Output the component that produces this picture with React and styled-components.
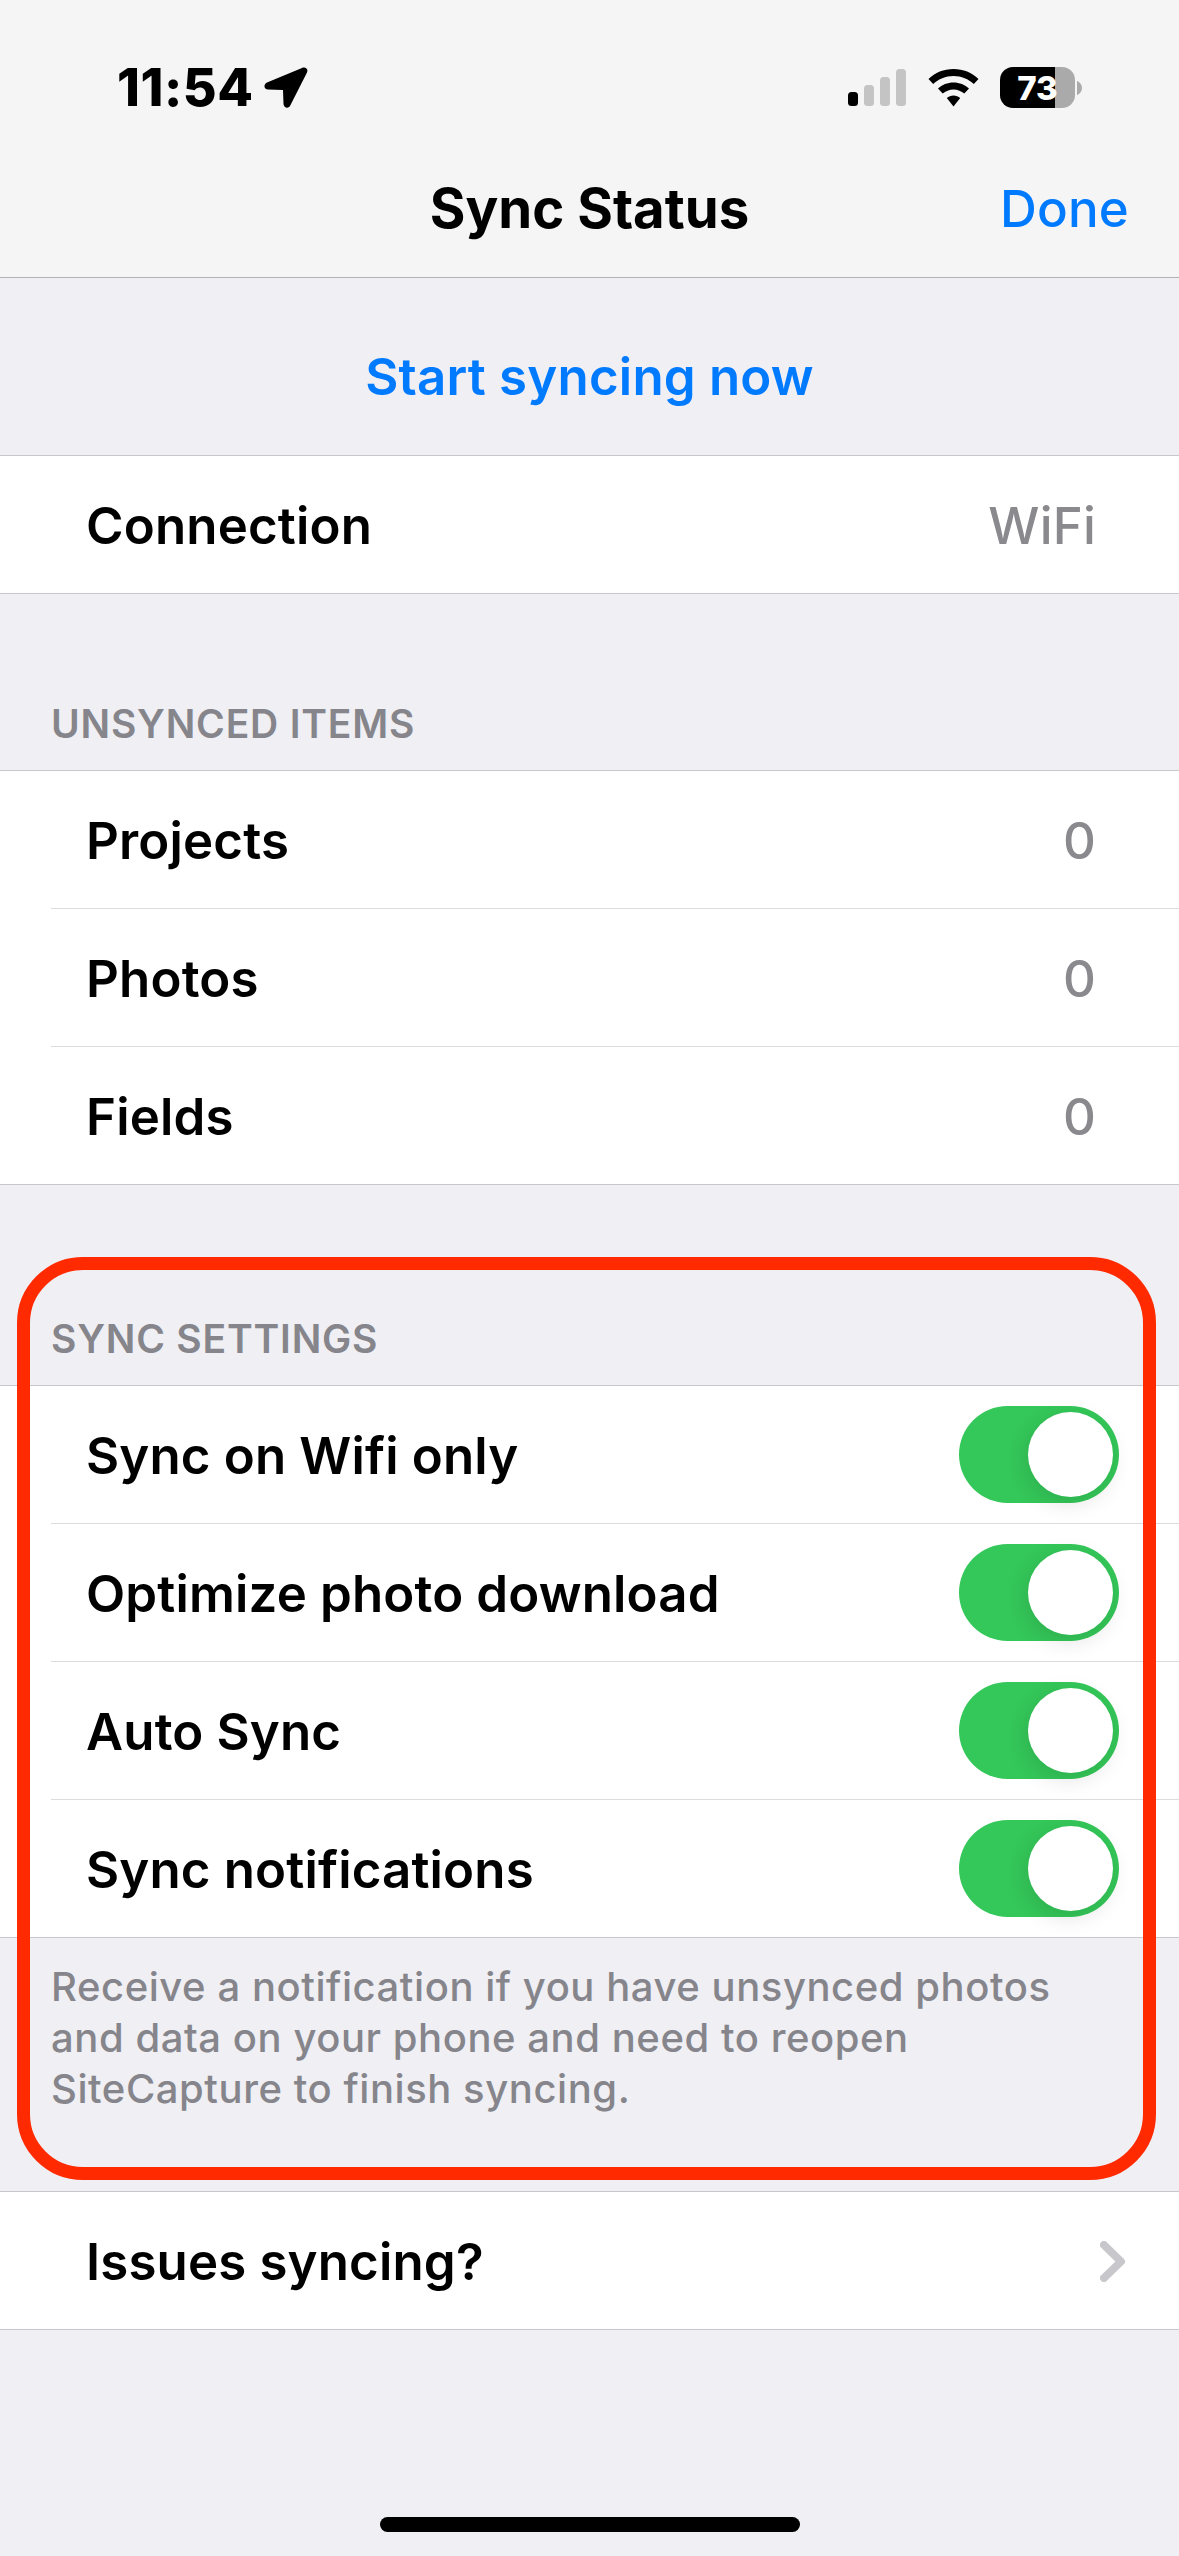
import React from "react";
import styled, { createGlobalStyle } from "styled-components";

const GlobalStyle = createGlobalStyle`
  html, body {
    margin: 0;
    padding: 0;
    background: #efeff4;
    font-family: Inter, "Noto Sans", sans-serif;
  }
`;

const Page = styled.div`
  position: relative;
  display: flex;
  flex-direction: column;
  width: 1179px;
  height: 2556px;
  overflow: hidden;
  background: #efeff4;
`;

// top of the screen ---------
const Header = styled.header`
  height: 277px;
  background: #f5f5f6;
  border-bottom: 1px solid #b1b1b5;
`;

const StatusBar = styled.div`
  display: flex;
  align-items: center;
  height: 41px;
  padding: 67px 98px 0 117px;
`;

const Time = styled.span`
  margin-right: 11px;
  font-size: 52px;
  font-weight: 800;
  letter-spacing: 0.5px;
  line-height: 41px;
  color: #000;
`;

const StatusIcons = styled.div`
  display: flex;
  align-items: center;
  gap: 22px;
  margin-left: auto;
`;

const Battery = styled.div`
  display: flex;
  align-items: center;
  justify-content: center;
  width: 75px;
  height: 41px;
  border-radius: 13px;
  background: linear-gradient(to right, #000 55px, #aaa 55px);
  font-size: 33px;
  font-weight: 800;
  color: #fff;
`;

const BatteryWrap = styled.div`
  display: flex;
  align-items: center;
  gap: 2px;
  margin-left: -1px;
  margin-right: -1px;
`;

const NavRow = styled.div`
  display: grid;
  grid-template-columns: 1fr auto 1fr;
  align-items: center;
  height: 60px;
  margin-top: 67px;
  padding: 0 50px;
`;

const NavTitle = styled.h1`
  grid-column: 2;
  margin: 0;
  font-size: 54.5px;
  font-weight: 700;
  color: #000;
`;

const NavAction = styled.span`
  justify-self: end;
  font-size: 51px;
  font-weight: 500;
  letter-spacing: 0.2px;
  color: #007aff;
`;

const ActionBand = styled.div`
  display: flex;
  align-items: center;
  justify-content: center;
  height: 177px;
  padding-top: 20px;
  box-sizing: border-box;
  font-size: 51px;
  font-weight: 600;
  letter-spacing: 0.2px;
  color: #007aff;
`;

// lists ---------
const Group = styled.div`
  background: #fff;
  border-top: 1px solid #c8c7cc;
  border-bottom: 1px solid #c8c7cc;
`;

const Row = styled.div`
  display: flex;
  align-items: center;
  justify-content: space-between;
  box-sizing: border-box;
  height: 138.3px;
  margin-left: 51px;
  padding: 2px 60px 0 35px;
  border-bottom: 1px solid #dcdcde;

  &:last-child {
    height: 137px;
    border-bottom: none;
  }
`;

const Label = styled.span`
  font-size: 51px;
  font-weight: 600;
  letter-spacing: 0.15px;
  color: #000;
`;

const Value = styled.span`
  margin-right: 23px;
  font-size: 51px;
  font-weight: 500;
  letter-spacing: 0.2px;
  color: #8a8a8e;
`;

const Chevron = styled.svg`
  width: 26px;
  height: 41px;
  margin-right: -7px;
`;

const SectionTitle = styled.div`
  display: flex;
  align-items: flex-end;
  box-sizing: border-box;
  height: ${(p) => p.$height}px;
  padding: 0 0 21px 51px;
  font-size: 39px;
  font-weight: 600;
  letter-spacing: 0.8px;
  line-height: 50px;
  color: #85858b;
`;

const FooterNote = styled.p`
  box-sizing: border-box;
  height: 252.5px;
  margin: 0;
  padding: 23px 40px 0 51px;
  font-size: 40px;
  font-weight: 500;
  letter-spacing: 0.56px;
  line-height: 51px;
  color: #85858b;
`;

const Toggle = styled.div`
  display: flex;
  align-items: center;
  justify-content: flex-end;
  box-sizing: border-box;
  width: 160px;
  height: 97px;
  margin-top: -2px;
  padding-right: 6px;
  border-radius: 49px;
  background: #34c759;
`;

const Knob = styled.div`
  width: 85px;
  height: 85px;
  border-radius: 50%;
  background: #fff;
  box-shadow: -2px 6px 22px rgba(0, 0, 0, 0.12);
`;

const Annotation = styled.div`
  position: absolute;
  top: 1257px;
  left: 17px;
  width: 1139px;
  height: 923px;
  box-sizing: border-box;
  border: 13px solid #ff2a00;
  border-radius: 66px;
  pointer-events: none;
`;

const HomeIndicator = styled.div`
  align-self: center;
  width: 420px;
  height: 15px;
  margin-top: auto;
  margin-bottom: 24px;
  border-radius: 8px;
  background: #000;
`;

const SignalBars = () => (
  <svg width="58" height="37" viewBox="0 0 58 37">
    <rect x="0" y="23" width="10" height="14" rx="3.5" fill="#000" />
    <rect x="16" y="16" width="10" height="21" rx="3.5" fill="#c4c4c4" />
    <rect x="32" y="8" width="10" height="29" rx="3.5" fill="#c4c4c4" />
    <rect x="48" y="0" width="10" height="37" rx="3.5" fill="#c4c4c4" />
  </svg>
);

const WifiIcon = () => (
  <svg width="51" height="38" viewBox="0 0 51 38">
    <path
      d="M25.5 0C15.8 0 7 3.7 0.5 9.9L5.2 15C10.5 10 17.6 7 25.5 7S40.5 10 45.8 15L50.5 9.9C44 3.7 35.2 0 25.5 0Z"
      fill="#000"
    />
    <path
      d="M25.5 13.5C19.5 13.5 14.1 15.8 10 19.6L14.7 24.6C17.6 22 21.3 20.4 25.5 20.4S33.4 22 36.3 24.6L41 19.6C36.9 15.8 31.5 13.5 25.5 13.5Z"
      fill="#000"
    />
    <path
      d="M25.5 26.6C22.9 26.6 20.6 27.5 18.8 29.1L25.5 37.6L32.2 29.1C30.4 27.5 28.1 26.6 25.5 26.6Z"
      fill="#000"
    />
  </svg>
);

const LocationArrow = () => (
  <svg width="44" height="42" viewBox="0 0 44 42">
    <path
      d="M38 1L3 15.5C-1 17.5 0 22.5 4 22.5L19 23L19.5 37C20 41.5 25 42 26.5 38L43 5.5C44.5 2 41.5 -0.5 38 1Z"
      fill="#000"
    />
  </svg>
);

function SwitchRow({ label }) {
  return (
    <Row>
      <Label>{label}</Label>
      <Toggle>
        <Knob />
      </Toggle>
    </Row>
  );
}

function ValueRow({ label, value }) {
  return (
    <Row>
      <Label>{label}</Label>
      <Value>{value}</Value>
    </Row>
  );
}

export default function App() {
  return (
    <Page>
      <GlobalStyle />
      <Header>
        <StatusBar>
          <Time>11:54</Time>
          <LocationArrow />
          <StatusIcons>
            <SignalBars />
            <WifiIcon />
            <BatteryWrap>
              <Battery>73</Battery>
              <svg width="5" height="14" viewBox="0 0 5 14">
                <path d="M0 0C3 1 5 4 5 7S3 13 0 14Z" fill="#aaa" />
              </svg>
            </BatteryWrap>
          </StatusIcons>
        </StatusBar>
        <NavRow>
          <NavTitle>Sync Status</NavTitle>
          <NavAction>Done</NavAction>
        </NavRow>
      </Header>

      <ActionBand>Start syncing now</ActionBand>
      <Group>
        <ValueRow label="Connection" value="WiFi" />
      </Group>

      <SectionTitle $height={175.5}>UNSYNCED ITEMS</SectionTitle>
      <Group>
        <ValueRow label="Projects" value="0" />
        <ValueRow label="Photos" value="0" />
        <ValueRow label="Fields" value="0" />
      </Group>

      <SectionTitle $height={199.5}>SYNC SETTINGS</SectionTitle>
      <Group>
        <SwitchRow label="Sync on Wifi only" />
        <SwitchRow label="Optimize photo download" />
        <SwitchRow label="Auto Sync" />
        <SwitchRow label="Sync notifications" />
      </Group>
      <FooterNote>
        Receive a notification if you have unsynced photos
        <br />
        and data on your phone and need to reopen
        <br />
        SiteCapture to finish syncing.
      </FooterNote>

      <Group>
        <Row>
          <Label>Issues syncing?</Label>
          <Chevron viewBox="0 0 26 41">
            <path
              d="M4 4L21 20.5L4 37"
              fill="none"
              stroke="#c7c7cc"
              strokeWidth="8"
              strokeLinecap="round"
              strokeLinejoin="round"
            />
          </Chevron>
        </Row>
      </Group>

      <HomeIndicator />
      <Annotation />
    </Page>
  );
}
